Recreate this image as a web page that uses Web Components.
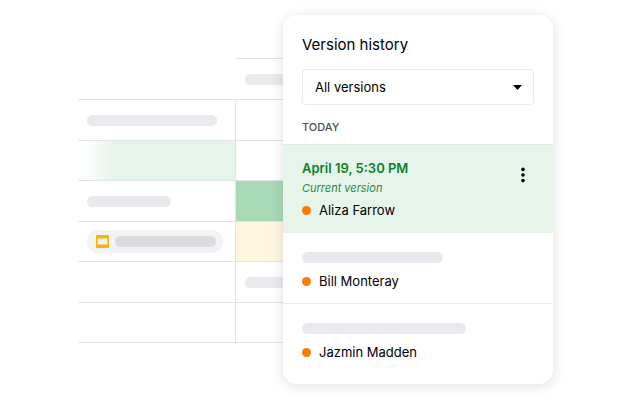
<!DOCTYPE html>
<html lang="en">
<head>
<meta charset="utf-8">
<title>Version history</title>
<style>
  body {
    margin: 0;
    background: #fff;
    color: #000;
    font-family: Inter, "Liberation Sans", sans-serif;
    font-size: 13px;
    line-height: 20px;
  }
</style>
</head>
<body>

<history-page>
  <sheet-grid slot="sheet"></sheet-grid>
  <version-panel slot="panel" heading="Version history">
    <version-item current date="April 19, 5:30 PM" note="Current version" author="Aliza Farrow"></version-item>
    <version-item author="Bill Monteray" style="--bar: 141px"></version-item>
    <version-item author="Jazmin Madden" style="--bar: 164px"></version-item>
  </version-panel>
</history-page>

<script>
// Small base class: each element only supplies its template
class BaseElement extends HTMLElement {
  constructor() {
    super();
    this.attachShadow({ mode: "open" });
  }

  connectedCallback() {
    let t = document.createElement("template");
    t.innerHTML = this.template;
    this.shadowRoot.replaceChildren(t.content.cloneNode(true));
  }
}

class HistoryPage extends BaseElement {
  get template() {
    return `
    <style>
      :host {
        display: flex;
        align-items: flex-start;
        padding: 15px 79px 18px 78px;
      }

      ::slotted([slot="sheet"]) {
        flex: 1;
        min-width: 0;
        margin-top: 43px;
      }

      ::slotted([slot="panel"]) {
        flex: 0 0 270px;
      }
    </style>

    <slot name="sheet"></slot>
    <slot name="panel"></slot>
    `;
  }
}

// Grey rounded bar that stands in for text
class SkeletonBar extends BaseElement {
  get template() {
    return `
    <style>
      :host {
        display: block;
        flex: none;
        width: var(--bar, 130px);
        height: 11px;
        border-radius: 6px;
        background: var(--bar-color, #e8eaed);
      }
    </style>
    `;
  }
}

class SheetGrid extends BaseElement {
  get template() {
    return `
    <style>
      :host {
        display: grid;
        grid-template-columns: 157px minmax(0, 1fr);
        grid-template-rows: 41px 41px 40px 41px 40px 41px 40px;
        border-bottom: 1px solid #e3e4e8;
        overflow: hidden;
      }

      .cell {
        display: flex;
        align-items: center;
        padding-left: 9px;
        border-top: 1px solid #e3e4e8;
        overflow: hidden;
      }

      .value {
        border-left: 1px solid #e3e4e8;
      }

      .corner {
        border-top-color: transparent;
      }

      .head {
        margin-left: 1px;
      }

      .fade { background: linear-gradient(to right, #fff 4px, #e6f4ea 36px); }
      .green { background: #a8dab5; }
      .yellow { background: #fef7e0; }

      .chip {
        display: flex;
        align-items: center;
        gap: 6px;
        height: 23px;
        padding: 0 7px 0 9px;
        border-radius: 12px;
        background: #f1f3f4;
        --bar-color: #dadce0;
      }

      svg { display: block; }
    </style>

    <div class="cell corner"></div>
    <div class="cell head"><skeleton-bar></skeleton-bar></div>
    <div class="cell"><skeleton-bar></skeleton-bar></div>
    <div class="cell value"></div>
    <div class="cell fade"></div>
    <div class="cell value"></div>
    <div class="cell"><skeleton-bar style="--bar: 84px"></skeleton-bar></div>
    <div class="cell value green"></div>
    <div class="cell">
      <div class="chip">
        <svg width="13" height="13" viewBox="0 0 13 13" aria-hidden="true">
          <path fill="#f9b30b" fill-rule="evenodd" d="M.6 0h11.8a.6.6 0 0 1 .6.6v11.8a.6.6 0 0 1-.6.6H.6a.6.6 0 0 1-.6-.6V.6A.6.6 0 0 1 .6 0zM1.6 3.5v6h9.8v-6z"/>
        </svg>
        <skeleton-bar style="--bar: 101px"></skeleton-bar>
      </div>
    </div>
    <div class="cell value yellow"></div>
    <div class="cell"></div>
    <div class="cell value"><skeleton-bar></skeleton-bar></div>
    <div class="cell"></div>
    <div class="cell value"></div>
    `;
  }
}

class VersionPanel extends BaseElement {
  get template() {
    return `
    <style>
      :host {
        display: block;
        position: relative;
        border-radius: 14px;
        background: #fff;
        box-shadow: 0 2px 14px rgba(0, 0, 0, 0.13);
        overflow: hidden;
      }

      header {
        padding: 20px 19px 7px;
      }

      h1 {
        margin: 0 0 14px;
        font-size: 15px;
        font-weight: 400;
        line-height: 20px;
      }

      .filter {
        display: grid;
        align-items: center;
      }

      .filter > * {
        grid-area: 1 / 1;
      }

      select {
        appearance: none;
        width: 100%;
        height: 36px;
        padding: 0 12px 1px;
        border: 1px solid #e8eaed;
        border-radius: 4px;
        background: #fff;
        color: inherit;
        font: inherit;
      }

      .arrow {
        justify-self: end;
        margin-right: 12px;
        pointer-events: none;
      }

      h2 {
        margin: 12px 0 0;
        color: #4b4f54;
        font-size: 11px;
        font-weight: 500;
        line-height: 20px;
      }
    </style>

    <header>
      <h1>${this.getAttribute("heading")}</h1>
      <div class="filter">
        <select aria-label="Filter versions">
          <option>All versions</option>
          <option>Named versions</option>
        </select>
        <svg class="arrow" width="9" height="5" viewBox="0 0 9 5" aria-hidden="true">
          <path d="M0 0h9L4.5 5z"/>
        </svg>
      </div>
      <h2>TODAY</h2>
    </header>
    <slot></slot>
    `;
  }
}

class VersionItem extends BaseElement {
  get template() {
    let current = this.hasAttribute("current");
    let details = current ? `
      <div class="date">${this.getAttribute("date")}</div>
      <div class="note">${this.getAttribute("note")}</div>
    ` : `<skeleton-bar></skeleton-bar>`;
    let menu = current ? `
      <button type="button" aria-label="More actions">
        <svg width="4" height="16" viewBox="0 0 4 16">
          <circle cx="2" cy="2.4" r="1.8"/>
          <circle cx="2" cy="8" r="1.8"/>
          <circle cx="2" cy="13.6" r="1.8"/>
        </svg>
      </button>
    ` : "";

    return `
    <style>
      :host {
        display: flex;
        justify-content: space-between;
        align-items: flex-start;
        padding: 19px 19px 12px;
        border-bottom: 1px solid #eceef0;
      }

      :host([current]) {
        padding: 13px 19px;
        border-top: 1px solid #dfeae4;
        border-bottom: 0;
        background: #e6f4ea;
      }

      :host(:last-child) {
        padding-bottom: 22px;
        border-bottom: 0;
      }

      .date {
        color: #0b8028;
        font-weight: 600;
      }

      .note {
        padding: 1px 0 3px;
        color: #2b8a44;
        font-size: 11px;
        font-style: italic;
        line-height: 18px;
      }

      .author {
        display: flex;
        align-items: center;
        gap: 8px;
      }

      skeleton-bar {
        margin-bottom: 8px;
      }

      .dot {
        width: 9px;
        height: 9px;
        border-radius: 50%;
        background: #fa7b05;
      }

      button {
        display: flex;
        justify-content: center;
        align-items: center;
        width: 22px;
        height: 34px;
        padding: 0;
        border: 0;
        background: none;
      }
    </style>

    <div>
      ${details}
      <div class="author"><span class="dot"></span><span>${this.getAttribute("author")}</span></div>
    </div>
    ${menu}
    `;
  }
}

customElements.define("skeleton-bar", SkeletonBar);
customElements.define("sheet-grid", SheetGrid);
customElements.define("version-item", VersionItem);
customElements.define("version-panel", VersionPanel);
customElements.define("history-page", HistoryPage);
</script>
</body>
</html>
